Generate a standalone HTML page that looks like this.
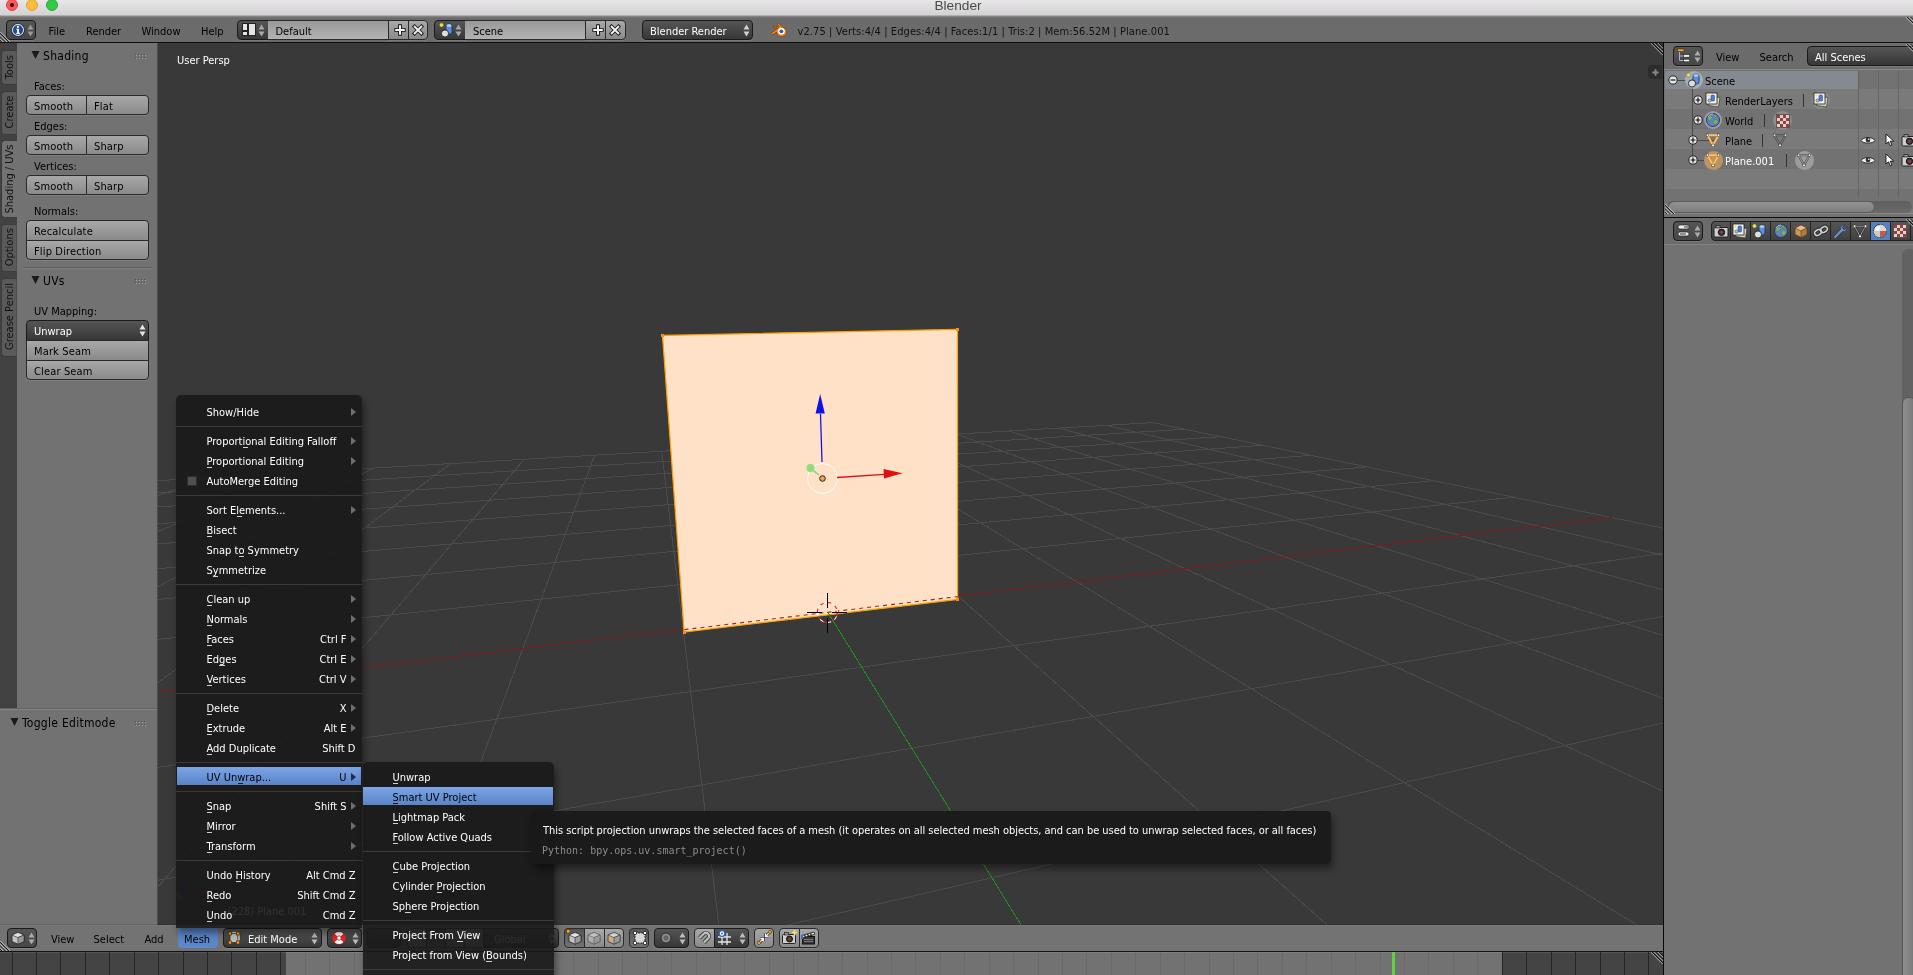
<!DOCTYPE html><html><head><meta charset="utf-8"><title>Blender</title><style>
*{box-sizing:border-box;margin:0;padding:0}
html,body{width:1913px;height:975px;overflow:hidden;background:#727272}
body{position:relative;font-family:"DejaVu Sans Condensed","DejaVu Sans","Liberation Sans",sans-serif;font-size:11px;color:#000;line-height:1;-webkit-font-smoothing:antialiased}
.a{position:absolute}
.t{position:absolute;white-space:nowrap;line-height:14px;height:14px;margin-top:1px}
.w{color:#fff}
/* mac title */
#title{left:0;top:0;width:1913px;height:16px;background:linear-gradient(#e8e6e8,#d3d2d3);border-bottom:1px solid #b0aeb0}
#title .tt{left:0;width:1913px;text-align:center;top:-3.5px;padding-left:3px;font-family:"Liberation Sans","DejaVu Sans",sans-serif;font-size:13.7px;color:#4a4a4a;line-height:16px;height:16px}
.tl{position:absolute;width:12px;height:12px;border-radius:50%;top:-1.5px}
/* headers */
.hdr{background:#727272}
.hdrd{background:#6b6b6b}
/* buttons */
.btn{position:absolute;box-shadow:0 1px 0 rgba(255,255,255,.1);border:1px solid #2a2a2a;border-radius:4px;background:linear-gradient(#a8a8a8,#8a8a8a);height:20px}
.btn .t{top:3px;letter-spacing:.15px}
.dd{position:absolute;box-shadow:0 1px 0 rgba(255,255,255,.1);border:1px solid #1a1a1a;border-radius:4px;background:linear-gradient(#555,#373737);height:20px;color:#fff}
.dd .t{top:3px}
.tf{position:absolute;border:1px solid #2a2a2a;background:linear-gradient(#999,#b2b2b2);height:20px}
.sel{background:linear-gradient(#555,#737373)}
.ud{position:absolute;width:7px;height:13px}
/* menu */
.menu{position:absolute;background:rgba(25,25,25,.9);box-shadow:2px 5px 7px 0 rgba(0,0,0,.42)}
.mi{position:absolute;left:0;right:0;height:20px;color:#fff}
.mi .t{top:3px}
.mi.hl{background:linear-gradient(#7ba5e7,#5a84c6);color:#000;height:18px;left:.5px;right:.5px}
.mi .sc{position:absolute;top:4px;line-height:14px;white-space:nowrap}
.msep{position:absolute;left:0;right:0;height:1px;background:#3a3a3a}
.arr{position:absolute;width:0;height:0;border-left:5px solid #6e6e6e;border-top:4px solid transparent;border-bottom:4px solid transparent}
u{text-decoration:underline;text-decoration-thickness:1px;text-underline-offset:2px;text-decoration-skip-ink:none;text-decoration-color:rgba(255,255,255,.78)}
.hl u{text-decoration-color:rgba(0,0,0,.8)}
.ul{position:absolute;top:15.8px;height:1.2px;width:5.4px;background:rgba(255,255,255,.8)}
.hl .ul{background:rgba(0,0,0,.8)}
</style></head><body><div id="root" style="position:absolute;left:0;top:0;width:1913px;height:975px;will-change:transform"><div class="a" id="vp" style="left:158px;top:43px;width:1505px;height:882px;background:#393939;overflow:hidden"><svg class="a" style="left:0;top:0" width="1505" height="882" viewBox="0 0 1505 882" shape-rendering="crispEdges"><path d="M-7745.4 2849.4L-41.7 440.1M11423.7 2609.6L10616.1 2370.3M-6526.8 2834.2L48.4 434.9M7558.3 2657.9L5122.6 1233.6M-5308.2 2818.9L133.9 429.9M3692.8 2706.3L3492.7 896.4M-4089.5 2803.7L215.2 425.1M-172.6 2754.7L2710.9 734.6M-2870.9 2788.4L292.6 420.6M-4038.0 2803.0L2251.9 639.6M-1652.2 2773.2L366.3 416.3M-7324.3 2717.7L1950.0 577.2M-433.6 2757.9L436.6 412.2M-2983.1 1360.0L1736.3 533.0M785.0 2742.7L503.7 408.3M-1743.3 972.3L1577.1 500.0M3222.3 2712.2L629.4 400.9M-813.7 681.6L1355.8 454.2M4440.9 2696.9L688.2 397.5M-589.3 611.4L1275.7 437.6M5659.6 2681.7L744.6 394.2M-430.9 561.9L1209.2 423.9M6878.2 2666.4L798.7 391.0M-313.1 525.0L1153.0 412.3M8096.9 2651.2L850.7 388.0M-222.1 496.6L1104.9 402.3M9315.5 2635.9L900.7 385.1M-149.7 473.9L1063.3 393.7M10534.1 2620.7L948.7 382.3M-90.7 455.5L1027.0 386.2M10616.1 2370.3L995.0 379.6M-41.7 440.1L995.0 379.6" stroke="#4b4b4b" stroke-width="1" fill="none"/>
<path d="M-1156.2 788.7L1453.9 474.5" stroke="#7a1c1c" stroke-width="1" fill="none"/>
<path d="M2003.7 2727.4L567.9 404.5" stroke="#1f7a1f" stroke-width="1" fill="none"/><polygon points="504.5,292.4 799.5,286.3 799.6,556.4 526.1,589.0" fill="#fee1c7" stroke="#ffa000" stroke-width="1.2" shape-rendering="auto"/><path d="M526.5 586.6L799.5 553.6" stroke="#a32a12" stroke-width="1.1" stroke-dasharray="4 4" fill="none" shape-rendering="auto"/><path d="M669.6 568.9L2003.7 2727.4" stroke="#1f8a1f" stroke-width="1" fill="none"/><rect x="503.0" y="290.9" width="3" height="3" fill="#ff8c1a"/><rect x="798.0" y="284.8" width="3" height="3" fill="#ff8c1a"/><rect x="798.1" y="554.9" width="3" height="3" fill="#ff8c1a"/><rect x="524.6" y="587.5" width="3" height="3" fill="#ff8c1a"/></svg><svg class="a" style="left:0;top:0" width="1505" height="882" viewBox="158 43 1505 882"><circle cx="822.5" cy="478.5" r="15" fill="none" stroke="#fff" stroke-width="1" opacity=".9"/><circle cx="822.5" cy="478.5" r="2.8" fill="#f5a64a" stroke="#222" stroke-width="1"/><path d="M822 462L820.5 414" stroke="#1414e0" stroke-width="1.3"/><path d="M820.2 394l4.6 19.5h-9.2z" fill="#1010e8"/><path d="M837 477.5L884 474.3" stroke="#e01010" stroke-width="1.3"/><path d="M902.5 473.2l-18.5 5.2l-.5-9.4z" fill="#e01010"/><path d="M819 475L812 469.5" stroke="#7fd26a" stroke-width="1.2"/><circle cx="810.5" cy="468" r="4" fill="#8fdc78"/><circle cx="827.3" cy="612.5" r="10" fill="none" stroke="#e02020" stroke-width="1.1" stroke-dasharray="3.9 3.95"/><circle cx="827.3" cy="612.5" r="10" fill="none" stroke="#fff" stroke-width="1.1" stroke-dasharray="3.9 3.95" stroke-dashoffset="3.9"/><path d="M827.5 593v15M827.5 618v15M807 612.5h15M832 612.5h15" stroke="#000" stroke-width="1" shape-rendering="crispEdges"/></svg><div class="t w" style="left:19px;top:10px">User Persp</div><div class="t w" style="left:69.5px;top:861px">(228) Plane.001</div><div class="a" style="left:1490px;top:22px;width:14px;height:14px;background:#2c2c2c;border-radius:4px 0 0 4px"></div><svg class="a" style="left:1492.5px;top:24.500px" width="9" height="9" viewBox="0 0 9 9"><path d="M4.500 1.300v6.400M1.300 4.500h6.400" stroke="#858585" stroke-width="2"/></svg><svg class="a" style="left:0;top:0" width="1505" height="882" viewBox="158 43 1505 882"><path d="M183 899.500L214.500 889.500" stroke="#c02020" stroke-width="1.200"/><path d="M183 899.500L176.500 894.500" stroke="#20c020" stroke-width="1.200"/><path d="M183 899.500L183 868" stroke="#2020d0" stroke-width="1.200"/></svg></div><div class="a" style="left:0;top:43px;width:17px;height:665px;background:#424242"></div><div class="a" style="left:1px;top:49.5px;width:16px;height:35.5px;background:#5a5a5a;border:1px solid #3c3c3c;border-right:1px solid #4d4d4d;border-radius:4px 0 0 4px"></div><div class="t" style="left:3px;top:83.5px;width:35.5px;text-align:center;transform-origin:0 0;transform:rotate(-90deg);color:#111">Tools</div><div class="a" style="left:1px;top:90.5px;width:16px;height:44px;background:#5a5a5a;border:1px solid #3c3c3c;border-right:1px solid #4d4d4d;border-radius:4px 0 0 4px"></div><div class="t" style="left:3px;top:133px;width:44px;text-align:center;transform-origin:0 0;transform:rotate(-90deg);color:#111">Create</div><div class="a" style="left:1px;top:140px;width:16px;height:78px;background:#727272;border:1px solid #3c3c3c;border-right:none;border-radius:4px 0 0 4px"></div><div class="t" style="left:3px;top:216.5px;width:78px;text-align:center;transform-origin:0 0;transform:rotate(-90deg);color:#111">Shading / UVs</div><div class="a" style="left:1px;top:224px;width:16px;height:47.5px;background:#5a5a5a;border:1px solid #3c3c3c;border-right:1px solid #4d4d4d;border-radius:4px 0 0 4px"></div><div class="t" style="left:3px;top:270px;width:47.5px;text-align:center;transform-origin:0 0;transform:rotate(-90deg);color:#111">Options</div><div class="a" style="left:1px;top:277.5px;width:16px;height:79px;background:#5a5a5a;border:1px solid #3c3c3c;border-right:1px solid #4d4d4d;border-radius:4px 0 0 4px"></div><div class="t" style="left:3px;top:355px;width:79px;text-align:center;transform-origin:0 0;transform:rotate(-90deg);color:#111">Grease Pencil</div><div class="a" style="left:17px;top:43px;width:140px;height:665px;background:#727272"></div><div class="a" style="left:157px;top:43px;width:1px;height:882px;background:#4d4d4d"></div><svg class="a" style="left:31px;top:50px" width="10" height="10" viewBox="0 0 10 10"><path d="M0.5 1h8L4.5 9z" fill="#1a1a1a"/></svg><div class="t" style="left:43px;top:48px;font-size:12px;letter-spacing:.28px">Shading</div><svg class="a" style="left:135px;top:54px" width="12" height="5" viewBox="0 0 12 5"><rect x="0" y="0" width="1" height="1" fill="#505050"/><rect x="1" y="1" width="1" height="1" fill="#a2a2a2"/><rect x="0" y="3" width="1" height="1" fill="#505050"/><rect x="1" y="4" width="1" height="1" fill="#a2a2a2"/><rect x="3" y="0" width="1" height="1" fill="#505050"/><rect x="4" y="1" width="1" height="1" fill="#a2a2a2"/><rect x="3" y="3" width="1" height="1" fill="#505050"/><rect x="4" y="4" width="1" height="1" fill="#a2a2a2"/><rect x="6" y="0" width="1" height="1" fill="#505050"/><rect x="7" y="1" width="1" height="1" fill="#a2a2a2"/><rect x="6" y="3" width="1" height="1" fill="#505050"/><rect x="7" y="4" width="1" height="1" fill="#a2a2a2"/><rect x="9" y="0" width="1" height="1" fill="#505050"/><rect x="10" y="1" width="1" height="1" fill="#a2a2a2"/><rect x="9" y="3" width="1" height="1" fill="#505050"/><rect x="10" y="4" width="1" height="1" fill="#a2a2a2"/></svg><div class="t" style="left:34px;top:79px">Faces:</div><div class="btn" style="left:26px;top:95px;width:61px;height:20px;border-radius:4px 0 0 4px;"><div class="t" style="left:7px">Smooth</div></div><div class="btn" style="left:86px;top:95px;width:63px;height:20px;border-radius:0 4px 4px 0;"><div class="t" style="left:7px">Flat</div></div><div class="t" style="left:34px;top:119px">Edges:</div><div class="btn" style="left:26px;top:135px;width:61px;height:20px;border-radius:4px 0 0 4px;"><div class="t" style="left:7px">Smooth</div></div><div class="btn" style="left:86px;top:135px;width:63px;height:20px;border-radius:0 4px 4px 0;"><div class="t" style="left:7px">Sharp</div></div><div class="t" style="left:34px;top:159px">Vertices:</div><div class="btn" style="left:26px;top:175px;width:61px;height:20px;border-radius:4px 0 0 4px;"><div class="t" style="left:7px">Smooth</div></div><div class="btn" style="left:86px;top:175px;width:63px;height:20px;border-radius:0 4px 4px 0;"><div class="t" style="left:7px">Sharp</div></div><div class="t" style="left:34px;top:204px">Normals:</div><div class="btn" style="left:26px;top:220px;width:123px;height:21px;border-radius:4px 4px 0 0;"><div class="t" style="left:7px">Recalculate</div></div><div class="btn" style="left:26px;top:240px;width:123px;height:20px;border-radius:0 0 4px 4px;"><div class="t" style="left:7px">Flip Direction</div></div><div class="a" style="left:23px;top:267px;width:129px;height:1px;background:#5e5e5e"></div><div class="a" style="left:23px;top:268px;width:129px;height:1px;background:#808080"></div><svg class="a" style="left:31px;top:275px" width="10" height="10" viewBox="0 0 10 10"><path d="M0.5 1h8L4.5 9z" fill="#1a1a1a"/></svg><div class="t" style="left:43px;top:273px;font-size:12px;letter-spacing:.28px">UVs</div><svg class="a" style="left:135px;top:279px" width="12" height="5" viewBox="0 0 12 5"><rect x="0" y="0" width="1" height="1" fill="#505050"/><rect x="1" y="1" width="1" height="1" fill="#a2a2a2"/><rect x="0" y="3" width="1" height="1" fill="#505050"/><rect x="1" y="4" width="1" height="1" fill="#a2a2a2"/><rect x="3" y="0" width="1" height="1" fill="#505050"/><rect x="4" y="1" width="1" height="1" fill="#a2a2a2"/><rect x="3" y="3" width="1" height="1" fill="#505050"/><rect x="4" y="4" width="1" height="1" fill="#a2a2a2"/><rect x="6" y="0" width="1" height="1" fill="#505050"/><rect x="7" y="1" width="1" height="1" fill="#a2a2a2"/><rect x="6" y="3" width="1" height="1" fill="#505050"/><rect x="7" y="4" width="1" height="1" fill="#a2a2a2"/><rect x="9" y="0" width="1" height="1" fill="#505050"/><rect x="10" y="1" width="1" height="1" fill="#a2a2a2"/><rect x="9" y="3" width="1" height="1" fill="#505050"/><rect x="10" y="4" width="1" height="1" fill="#a2a2a2"/></svg><div class="t" style="left:34px;top:304px">UV Mapping:</div><div class="dd" style="left:26px;top:320px;width:123px;height:21px;border-radius:4px 4px 0 0"><div class="t" style="left:7px">Unwrap</div></div><svg class="a" style="left:139px;top:324px" width="7" height="13" viewBox="0 0 7 13"><path d="M3.5 0.5L6.5 5.5H.5zM3.5 12.5L6.5 7.5H.5z" fill="#e6e6e6"/></svg><div class="btn" style="left:26px;top:340px;width:123px;height:21px;border-radius:0;"><div class="t" style="left:7px">Mark Seam</div></div><div class="btn" style="left:26px;top:360px;width:123px;height:20px;border-radius:0 0 4px 4px;"><div class="t" style="left:7px">Clear Seam</div></div><div class="a" style="left:0;top:708px;width:157px;height:1px;background:#626262"></div><div class="a" style="left:0;top:709px;width:157px;height:1px;background:#868686;z-index:1"></div><div class="a" style="left:0;top:709px;width:157px;height:216px;background:#727272"></div><svg class="a" style="left:10px;top:717px" width="10" height="10" viewBox="0 0 10 10"><path d="M0.5 1h8L4.5 9z" fill="#1a1a1a"/></svg><div class="t" style="left:22px;top:715px;font-size:12px;letter-spacing:.28px">Toggle Editmode</div><svg class="a" style="left:135px;top:721px" width="12" height="5" viewBox="0 0 12 5"><rect x="0" y="0" width="1" height="1" fill="#505050"/><rect x="1" y="1" width="1" height="1" fill="#a2a2a2"/><rect x="0" y="3" width="1" height="1" fill="#505050"/><rect x="1" y="4" width="1" height="1" fill="#a2a2a2"/><rect x="3" y="0" width="1" height="1" fill="#505050"/><rect x="4" y="1" width="1" height="1" fill="#a2a2a2"/><rect x="3" y="3" width="1" height="1" fill="#505050"/><rect x="4" y="4" width="1" height="1" fill="#a2a2a2"/><rect x="6" y="0" width="1" height="1" fill="#505050"/><rect x="7" y="1" width="1" height="1" fill="#a2a2a2"/><rect x="6" y="3" width="1" height="1" fill="#505050"/><rect x="7" y="4" width="1" height="1" fill="#a2a2a2"/><rect x="9" y="0" width="1" height="1" fill="#505050"/><rect x="10" y="1" width="1" height="1" fill="#a2a2a2"/><rect x="9" y="3" width="1" height="1" fill="#505050"/><rect x="10" y="4" width="1" height="1" fill="#a2a2a2"/></svg><div class="a" style="left:1663px;top:43px;width:1px;height:932px;background:#080808"></div><div class="a" style="left:1664px;top:43px;width:249px;height:26px;background:#6b6b6b"></div><div class="a" style="left:1664px;top:69px;width:249px;height:1px;background:#888"></div><div class="a" style="left:1664px;top:70px;width:249px;height:143px;background:#727272;overflow:hidden"><div class="a" style="left:.5px;top:0;width:0;height:0"><div class="a" style="left:0;top:19px;width:248px;height:20px;background:#7a7a7a"></div><div class="a" style="left:0;top:59px;width:248px;height:20px;background:#7a7a7a"></div><div class="a" style="left:0;top:99px;width:248px;height:20px;background:#7a7a7a"></div><div class="a" style="left:0;top:139px;width:248px;height:20px;background:#7a7a7a"></div><div class="a" style="left:0;top:1px;width:193px;height:18px;background:#848a8f"></div><div class="a" style="left:193px;top:0;width:1px;height:128px;background:#666"></div><div class="a" style="left:213px;top:0;width:1px;height:128px;background:#666"></div><div class="a" style="left:233px;top:0;width:1px;height:128px;background:#666"></div></div></div><svg class="a" style="left:1665px;top:70px" width="100" height="110" viewBox="0 0 100 110"><path d="M12 10.500h18M27.500 18v73M27.500 70.500h22M27.500 90.500h22" stroke="#4a4a4a" stroke-width="1" fill="none"/></svg><svg class="a" style="left:1667.5px;top:74.5px" width="10" height="10" viewBox="0 0 10 10"><circle cx="5" cy="5" r="4.100" fill="#e6e6e6" stroke="#1a1a1a" stroke-width=".9"/><path d="M2.600 5h4.800" stroke="#111" stroke-width="1.200"/></svg><div class="a" style="left:1685px;top:71px;width:18px;height:18px;border-radius:50%;background:#a6adb3"></div><svg class="a" style="left:1685px;top:71px" width="18" height="18" viewBox="0 0 18 18"><rect x="8" y="3" width="6" height="10" rx="2.500" fill="#5c8fe0" stroke="#16305e" stroke-width=".8"/><ellipse cx="11" cy="4.500" rx="2.600" ry="1.300" fill="#b8d0f5"/><circle cx="7" cy="12.500" r="3.600" fill="#ddd" stroke="#222" stroke-width=".9"/><circle cx="3.500" cy="4" r="1.900" fill="#f2e85a" stroke="#8a8420" stroke-width=".6"/></svg><div class="t" style="left:1705px;top:74px">Scene</div><svg class="a" style="left:1692.5px;top:94.5px" width="10" height="10" viewBox="0 0 10 10"><circle cx="5" cy="5" r="4.100" fill="#e6e6e6" stroke="#1a1a1a" stroke-width=".9"/><path d="M2.600 5h4.800M5 2.600v4.800" stroke="#111" stroke-width="1.200"/></svg><svg class="a" style="left:1705px;top:92px" width="17" height="16" viewBox="0 0 17 16"><path d="M5 4l10 1.500-1.500 9.500L3.500 13.500z" fill="#d9d2b0" stroke="#333" stroke-width=".7"/><rect x="1" y="1" width="11" height="11" fill="#f0f0f0" stroke="#222" stroke-width=".8"/><rect x="6" y="3" width="3.500" height="6" rx="1" fill="#4d7fd6" stroke="#1c3a78" stroke-width=".5"/><circle cx="4.500" cy="8.500" r="1.600" fill="#bbb" stroke="#333" stroke-width=".5"/><circle cx="3.500" cy="3.500" r="1.100" fill="#f0e040"/></svg><div class="t" style="left:1725px;top:94px">RenderLayers</div><div class="a" style="left:1803px;top:94px;width:1px;height:13px;background:#333"></div><div class="a" style="left:1812px;top:91px;width:18px;height:18px;border-radius:50%;background:#8c8c8c"></div><svg class="a" style="left:1813px;top:92px" width="17" height="16" viewBox="0 0 17 16"><path d="M5 4l10 1.500-1.500 9.500L3.500 13.500z" fill="#d9d2b0" stroke="#333" stroke-width=".7"/><rect x="1" y="1" width="11" height="11" fill="#f0f0f0" stroke="#222" stroke-width=".8"/><rect x="6" y="3" width="3.500" height="6" rx="1" fill="#4d7fd6" stroke="#1c3a78" stroke-width=".5"/><circle cx="4.500" cy="8.500" r="1.600" fill="#bbb" stroke="#333" stroke-width=".5"/><circle cx="3.500" cy="3.500" r="1.100" fill="#f0e040"/></svg><svg class="a" style="left:1692.5px;top:114.5px" width="10" height="10" viewBox="0 0 10 10"><circle cx="5" cy="5" r="4.100" fill="#e6e6e6" stroke="#1a1a1a" stroke-width=".9"/><path d="M2.600 5h4.800M5 2.600v4.800" stroke="#111" stroke-width="1.200"/></svg><div class="a" style="left:1704px;top:111px;width:18px;height:18px;border-radius:50%;background:#9a9ab0"></div><svg class="a" style="left:1705px;top:112px" width="16" height="16" viewBox="0 0 16 16"><circle cx="8" cy="8" r="6.500" fill="#5d86c0" stroke="#27324a" stroke-width=".9"/><path d="M4 4.500c1.500-1 3-.5 3.500.5s-.5 2-1.500 2.500S4.500 9.500 3.500 8.500 3 5.500 4 4.500zM9 8c1-1 3.500-.5 4 1s-1.500 3.500-3 3.500S8 9 9 8zM9.500 2.500c1 0 2.500 1 2.500 2s-1.500.5-2.500 0-.5-2 0-2z" fill="#7fae6a" stroke="#3f6a3a" stroke-width=".4"/><path d="M3 5a6 6 0 0 1 5-3.200" stroke="#cfe2ff" stroke-width="1" fill="none" opacity=".7"/></svg><div class="t" style="left:1725px;top:114px">World</div><div class="a" style="left:1764px;top:114px;width:1px;height:13px;background:#333"></div><div class="a" style="left:1773px;top:111px;width:19px;height:19px;border-radius:50%;background:#8c8c8c"></div><svg class="a" style="left:1775.5px;top:113.5px" width="14" height="14" viewBox="0 0 14 14"><rect x=".5" y=".5" width="13" height="13" fill="#ddd2d2" stroke="#5a3a3a" stroke-width=".8"/><rect x="1" y="1" width="3" height="3" fill="#93423a"/><rect x="1" y="7" width="3" height="3" fill="#93423a"/><rect x="4" y="4" width="3" height="3" fill="#93423a"/><rect x="4" y="10" width="3" height="3" fill="#93423a"/><rect x="7" y="1" width="3" height="3" fill="#93423a"/><rect x="7" y="7" width="3" height="3" fill="#93423a"/><rect x="10" y="4" width="3" height="3" fill="#93423a"/><rect x="10" y="10" width="3" height="3" fill="#93423a"/></svg><svg class="a" style="left:1687.5px;top:134.5px" width="10" height="10" viewBox="0 0 10 10"><circle cx="5" cy="5" r="4.100" fill="#e6e6e6" stroke="#1a1a1a" stroke-width=".9"/><path d="M2.600 5h4.800M5 2.600v4.800" stroke="#111" stroke-width="1.200"/></svg><svg class="a" style="left:1705px;top:132px" width="16" height="16" viewBox="0 0 16 16"><path d="M2.500 3.200h11L8 13.300z" fill="none" stroke="#f29b30" stroke-width="2.300" stroke-linejoin="round"/><path d="M2.500 3.200h11L8 13.300z" fill="none" stroke="#ffe9cc" stroke-width=".7" stroke-linejoin="round"/><g fill="#fff" stroke="#3a2a10" stroke-width=".5"><rect x="1.300" y="2" width="2.400" height="2.400"/><rect x="12.300" y="2" width="2.400" height="2.400"/><rect x="6.800" y="12.100" width="2.400" height="2.400"/></g></svg><div class="t" style="left:1725px;top:134px">Plane</div><div class="a" style="left:1762px;top:134px;width:1px;height:13px;background:#333"></div><svg class="a" style="left:1772px;top:132px" width="16" height="16" viewBox="0 0 16 16"><path d="M2.500 3.200h11L8 13.300z" fill="none" stroke="#4a4a4a" stroke-width="2.300" stroke-linejoin="round"/><path d="M2.500 3.200h11L8 13.300z" fill="none" stroke="#9a9a9a" stroke-width=".7" stroke-linejoin="round"/><g fill="#e8e8e8" stroke="#3a2a10" stroke-width=".5"><rect x="1.300" y="2" width="2.400" height="2.400"/><rect x="12.300" y="2" width="2.400" height="2.400"/><rect x="6.800" y="12.100" width="2.400" height="2.400"/></g></svg><svg class="a" style="left:1687.5px;top:154.5px" width="10" height="10" viewBox="0 0 10 10"><circle cx="5" cy="5" r="4.100" fill="#e6e6e6" stroke="#1a1a1a" stroke-width=".9"/><path d="M2.600 5h4.800M5 2.600v4.800" stroke="#111" stroke-width="1.200"/></svg><div class="a" style="left:1703.5px;top:150.5px;width:19px;height:19px;border-radius:50%;background:#ba9462"></div><svg class="a" style="left:1705px;top:152px" width="16" height="16" viewBox="0 0 16 16"><path d="M2.500 3.200h11L8 13.300z" fill="none" stroke="#f29b30" stroke-width="2.300" stroke-linejoin="round"/><path d="M2.500 3.200h11L8 13.300z" fill="none" stroke="#ffe9cc" stroke-width=".7" stroke-linejoin="round"/><g fill="#fff" stroke="#3a2a10" stroke-width=".5"><rect x="1.300" y="2" width="2.400" height="2.400"/><rect x="12.300" y="2" width="2.400" height="2.400"/><rect x="6.800" y="12.100" width="2.400" height="2.400"/></g></svg><div class="t w" style="left:1725px;top:154px">Plane.001</div><div class="a" style="left:1786px;top:154px;width:1px;height:13px;background:#333"></div><div class="a" style="left:1794.5px;top:150.5px;width:19px;height:19px;border-radius:50%;background:#9c9c9c"></div><svg class="a" style="left:1796px;top:152px" width="16" height="16" viewBox="0 0 16 16"><path d="M2.500 3.200h11L8 13.300z" fill="none" stroke="#5a5a5a" stroke-width="2.300" stroke-linejoin="round"/><path d="M2.500 3.200h11L8 13.300z" fill="none" stroke="#b4b4b4" stroke-width=".7" stroke-linejoin="round"/><g fill="#eee" stroke="#3a2a10" stroke-width=".5"><rect x="1.300" y="2" width="2.400" height="2.400"/><rect x="12.300" y="2" width="2.400" height="2.400"/><rect x="6.800" y="12.100" width="2.400" height="2.400"/></g></svg><svg class="a" style="left:1860px;top:135px" width="16" height="10" viewBox="0 0 16 10"><path d="M1 5.500C3.500 1.500 12.500 1.500 15 5.500 12.500 9 3.500 9 1 5.500z" fill="#f2f2f2" stroke="#222" stroke-width=".9"/><circle cx="8" cy="5" r="2.400" fill="#333"/><circle cx="8.800" cy="4.200" r=".8" fill="#fff"/></svg><svg class="a" style="left:1885px;top:133px" width="10" height="14" viewBox="0 0 10 14"><path d="M1 1v10l2.500-2.200 1.800 4 1.700-.8-1.800-3.800H8.800z" fill="#fff" stroke="#111" stroke-width=".9" stroke-linejoin="round"/></svg><svg class="a" style="left:1901px;top:133px" width="16" height="14" viewBox="0 0 16 14"><rect x="1" y="3.500" width="14" height="9.500" rx="1" fill="#cfcfcf" stroke="#222"/><rect x="3" y="1.500" width="4" height="2.500" fill="#999" stroke="#222" stroke-width=".7"/><circle cx="8.500" cy="8.300" r="3.200" fill="#3a3a3a" stroke="#111"/><circle cx="8.500" cy="8.300" r="1.300" fill="#b03030"/></svg><svg class="a" style="left:1860px;top:155px" width="16" height="10" viewBox="0 0 16 10"><path d="M1 5.500C3.500 1.500 12.500 1.500 15 5.500 12.500 9 3.500 9 1 5.500z" fill="#f2f2f2" stroke="#222" stroke-width=".9"/><circle cx="8" cy="5" r="2.400" fill="#333"/><circle cx="8.800" cy="4.200" r=".8" fill="#fff"/></svg><svg class="a" style="left:1885px;top:153px" width="10" height="14" viewBox="0 0 10 14"><path d="M1 1v10l2.500-2.200 1.800 4 1.700-.8-1.800-3.800H8.800z" fill="#fff" stroke="#111" stroke-width=".9" stroke-linejoin="round"/></svg><svg class="a" style="left:1901px;top:153px" width="16" height="14" viewBox="0 0 16 14"><rect x="1" y="3.500" width="14" height="9.500" rx="1" fill="#cfcfcf" stroke="#222"/><rect x="3" y="1.500" width="4" height="2.500" fill="#999" stroke="#222" stroke-width=".7"/><circle cx="8.500" cy="8.300" r="3.200" fill="#3a3a3a" stroke="#111"/><circle cx="8.500" cy="8.300" r="1.300" fill="#b03030"/></svg><div class="dd" style="left:1673px;top:46px;width:30px;background:linear-gradient(#555,#474747)"></div><svg class="a" style="left:1693.5px;top:50px" width="7" height="13" viewBox="0 0 7 13"><path d="M3.5 0.5L6.5 5.5H.5zM3.5 12.5L6.5 7.5H.5z" fill="#aaa"/></svg><svg class="a" style="left:1676px;top:48px" width="16" height="16" viewBox="0 0 16 16"><path d="M3.500 3.500v9h4M3.500 8h4" stroke="#9ab4d8" stroke-width="1" fill="none"/><rect x="1.500" y="1" width="6.500" height="2.600" fill="#f5a63c" stroke="#4a2a00" stroke-width=".6"/><rect x="7.500" y="6.600" width="6" height="2.600" fill="#f0f0f0" stroke="#222" stroke-width=".6"/><rect x="7.500" y="11.200" width="6" height="2.600" fill="#f0f0f0" stroke="#222" stroke-width=".6"/></svg><div class="t" style="left:1716px;top:50px">View</div><div class="t" style="left:1759.500px;top:50px">Search</div><div class="dd" style="left:1807px;top:46px;width:120px"><div class="t" style="left:7px">All Scenes</div></div><div class="a" style="left:1667px;top:200.5px;width:245px;height:12px;border-radius:6px;background:linear-gradient(#5e5e5e,#6a6a6a)"></div><div class="a" style="left:1667.5px;top:200.5px;width:207px;height:12px;border-radius:6px;background:linear-gradient(#929292,#7e7e7e);border:1px solid #5a5a5a"></div><div class="a" style="left:1664px;top:213px;width:249px;height:1px;background:#8a8a8a"></div><div class="a" style="left:1664px;top:214px;width:249px;height:3px;background:#727272"></div><div class="a" style="left:1664px;top:217px;width:249px;height:1px;background:#0c0c0c"></div><div class="a" style="left:1664px;top:218px;width:249px;height:26px;background:#6b6b6b"></div><div class="a" style="left:1664px;top:243.5px;width:249px;height:1px;background:#838383"></div><div class="a" style="left:1664px;top:244.5px;width:249px;height:731px;background:#727272"></div><div class="dd" style="left:1673px;top:221px;width:30px;background:linear-gradient(#555,#474747)"></div><svg class="a" style="left:1693.5px;top:225px" width="7" height="13" viewBox="0 0 7 13"><path d="M3.5 0.5L6.5 5.5H.5zM3.5 12.5L6.5 7.5H.5z" fill="#aaa"/></svg><svg class="a" style="left:1677px;top:223px" width="15" height="15" viewBox="0 0 15 15"><rect x="1" y="2" width="11" height="4" rx="2" fill="#eee" stroke="#222" stroke-width=".7"/><rect x="1" y="9" width="11" height="4" rx="2" fill="#eee" stroke="#222" stroke-width=".7"/><path d="M7 4h4M3 11h6" stroke="#333" stroke-width="1.200"/></svg><div class="a" style="left:1710.5px;top:221px;width:21px;height:20px;border:1px solid #222;border-radius:4px 0 0 4px;background:linear-gradient(#565656,#404040);"></div><div class="a" style="left:1730.4px;top:221px;width:21px;height:20px;border:1px solid #222;border-radius:0;background:linear-gradient(#565656,#404040);"></div><div class="a" style="left:1750.3px;top:221px;width:21px;height:20px;border:1px solid #222;border-radius:0;background:linear-gradient(#565656,#404040);"></div><div class="a" style="left:1770.2px;top:221px;width:21px;height:20px;border:1px solid #222;border-radius:0;background:linear-gradient(#565656,#404040);"></div><div class="a" style="left:1790.1px;top:221px;width:21px;height:20px;border:1px solid #222;border-radius:0;background:linear-gradient(#565656,#404040);"></div><div class="a" style="left:1810.0px;top:221px;width:21px;height:20px;border:1px solid #222;border-radius:0;background:linear-gradient(#565656,#404040);"></div><div class="a" style="left:1829.9px;top:221px;width:21px;height:20px;border:1px solid #222;border-radius:0;background:linear-gradient(#565656,#404040);"></div><div class="a" style="left:1849.8px;top:221px;width:21px;height:20px;border:1px solid #222;border-radius:0;background:linear-gradient(#565656,#404040);"></div><div class="a" style="left:1869.7px;top:221px;width:21px;height:20px;border:1px solid #222;border-radius:0;background:#5680c2;"></div><div class="a" style="left:1889.6px;top:221px;width:21px;height:20px;border:1px solid #222;border-radius:0;background:linear-gradient(#565656,#404040);"></div><div class="a" style="left:1909.5px;top:221px;width:21px;height:20px;border:1px solid #222;border-radius:0;background:linear-gradient(#565656,#404040);"></div><svg class="a" style="left:1713px;top:224px" width="16" height="14" viewBox="0 0 16 14"><rect x="1" y="3.500" width="14" height="9.500" rx="1" fill="#cfcfcf" stroke="#222"/><rect x="3" y="1.500" width="4" height="2.500" fill="#999" stroke="#222" stroke-width=".7"/><circle cx="8.500" cy="8.300" r="3.200" fill="#3a3a3a" stroke="#111"/><circle cx="8.500" cy="8.300" r="1.300" fill="#b03030"/></svg><svg class="a" style="left:1732.4px;top:223px" width="17" height="16" viewBox="0 0 17 16"><path d="M5 4l10 1.500-1.500 9.500L3.500 13.500z" fill="#d9d2b0" stroke="#333" stroke-width=".7"/><rect x="1" y="1" width="11" height="11" fill="#f0f0f0" stroke="#222" stroke-width=".8"/><rect x="6" y="3" width="3.500" height="6" rx="1" fill="#4d7fd6" stroke="#1c3a78" stroke-width=".5"/><circle cx="4.500" cy="8.500" r="1.600" fill="#bbb" stroke="#333" stroke-width=".5"/><circle cx="3.500" cy="3.500" r="1.100" fill="#f0e040"/></svg><svg class="a" style="left:1751.3px;top:222px" width="18" height="18" viewBox="0 0 18 18"><rect x="8" y="3" width="6" height="10" rx="2.500" fill="#5c8fe0" stroke="#16305e" stroke-width=".8"/><ellipse cx="11" cy="4.500" rx="2.600" ry="1.300" fill="#b8d0f5"/><circle cx="7" cy="12.500" r="3.600" fill="#ddd" stroke="#222" stroke-width=".9"/><circle cx="3.500" cy="4" r="1.900" fill="#f2e85a" stroke="#8a8420" stroke-width=".6"/></svg><svg class="a" style="left:1772.7px;top:223px" width="16" height="16" viewBox="0 0 16 16"><circle cx="8" cy="8" r="6.500" fill="#5d86c0" stroke="#27324a" stroke-width=".9"/><path d="M4 4.500c1.500-1 3-.5 3.500.5s-.5 2-1.500 2.500S4.500 9.500 3.500 8.500 3 5.500 4 4.500zM9 8c1-1 3.500-.5 4 1s-1.500 3.500-3 3.500S8 9 9 8zM9.500 2.500c1 0 2.500 1 2.500 2s-1.500.5-2.500 0-.5-2 0-2z" fill="#7fae6a" stroke="#3f6a3a" stroke-width=".4"/><path d="M3 5a6 6 0 0 1 5-3.200" stroke="#cfe2ff" stroke-width="1" fill="none" opacity=".7"/></svg><svg class="a" style="left:1792.6px;top:223px" width="16" height="16" viewBox="0 0 16 16"><path d="M2 5l6-3 6 3v6.500l-6 3-6-3z" fill="#cb975f" stroke="#5a3a10" stroke-width=".8"/><path d="M2 5l6 3 6-3-6-3z" fill="#e3bd8c" stroke="#5a3a10" stroke-width=".6"/><path d="M8 8v6.500l6-3V5z" fill="#b07c45" stroke="#5a3a10" stroke-width=".6"/></svg><svg class="a" style="left:1812.5px;top:223px" width="16" height="16" viewBox="0 0 16 16"><g fill="none" stroke="#222" stroke-width="3.200"><rect x="1.500" y="7" width="7" height="5" rx="2.500" transform="rotate(-35 5 9.500)"/><rect x="7.500" y="4" width="7" height="5" rx="2.500" transform="rotate(-35 11 6.500)"/></g><g fill="none" stroke="#d0d0d0" stroke-width="1.600"><rect x="1.500" y="7" width="7" height="5" rx="2.500" transform="rotate(-35 5 9.500)"/><rect x="7.500" y="4" width="7" height="5" rx="2.500" transform="rotate(-35 11 6.500)"/></g></svg><svg class="a" style="left:1832.4px;top:223px" width="16" height="16" viewBox="0 0 16 16"><path d="M2.500 14.500l7-7.500a3.500 3.500 0 0 1 4-4.500l-2 2.200.5 1.800 1.800.5 2-2.200a3.500 3.500 0 0 1-4.500 4.200l-7 7.300z" transform="translate(-1,-.5)" fill="#7595c4" stroke="#2a3a55" stroke-width=".8"/></svg><svg class="a" style="left:1852.3px;top:223px" width="16" height="16" viewBox="0 0 16 16"><path d="M2.500 3.200h11L8 13.300z" fill="none" stroke="#2a2a2a" stroke-width="2.300" stroke-linejoin="round"/><path d="M2.500 3.200h11L8 13.300z" fill="none" stroke="#d0d0d0" stroke-width=".7" stroke-linejoin="round"/><g fill="#fff" stroke="#3a2a10" stroke-width=".5"><rect x="1.300" y="2" width="2.400" height="2.400"/><rect x="12.300" y="2" width="2.400" height="2.400"/><rect x="6.800" y="12.100" width="2.400" height="2.400"/></g></svg><svg class="a" style="left:1872.2px;top:223px" width="16" height="16" viewBox="0 0 16 16"><circle cx="8" cy="8" r="6.500" fill="#e8e8e8" stroke="#222" stroke-width=".8"/><path d="M8 8V1.500A6.500 6.500 0 0 1 14.500 8z" fill="#d9d9d9"/><path d="M8 8h6.500A6.500 6.500 0 0 1 8 14.500z" fill="#b8604a"/><path d="M8 8v6.500A6.500 6.500 0 0 1 1.500 8z" fill="#c9c9c9"/><circle cx="5.500" cy="5.500" r="2" fill="#fff" opacity=".8"/></svg><svg class="a" style="left:1893.1px;top:224px" width="14" height="14" viewBox="0 0 14 14"><rect x=".5" y=".5" width="13" height="13" fill="#ddd2d2" stroke="#5a3a3a" stroke-width=".8"/><rect x="1" y="1" width="3" height="3" fill="#93423a"/><rect x="1" y="7" width="3" height="3" fill="#93423a"/><rect x="4" y="4" width="3" height="3" fill="#93423a"/><rect x="4" y="10" width="3" height="3" fill="#93423a"/><rect x="7" y="1" width="3" height="3" fill="#93423a"/><rect x="7" y="7" width="3" height="3" fill="#93423a"/><rect x="10" y="4" width="3" height="3" fill="#93423a"/><rect x="10" y="10" width="3" height="3" fill="#93423a"/></svg><div class="a" style="left:1902px;top:249px;width:14px;height:740px;border-radius:6px;background:#626262"></div><div class="a" style="left:1902px;top:397px;width:14px;height:600px;border-radius:6px;background:linear-gradient(90deg,#8f8f8f,#767676);border:1px solid #555"></div><svg class="a" style="left:1665px;top:204px" width="10" height="10" viewBox="0 0 10 10"><path d="M0 1.0L9.0 10M0 4.5L5.5 10M0 8.0L2.0 10" stroke="rgba(0,0,0,.75)" stroke-width="1"/><path d="M0 -0.3L10.3 10M0 3.2L6.8 10M0 6.7L3.3 10" stroke="rgba(255,255,255,.62)" stroke-width="1"/></svg><svg class="a" style="left:1906px;top:44px" width="12" height="12" viewBox="0 0 12 12"><path d="M1.0 0L12 11.0M4.5 0L12 7.5M8.0 0L12 4.0" stroke="rgba(0,0,0,.75)" stroke-width="1"/><path d="M-0.3 0L12 12.3M3.2 0L12 8.8M6.7 0L12 5.3" stroke="rgba(255,255,255,.62)" stroke-width="1"/></svg><svg class="a" style="left:1651px;top:43px" width="12" height="12" viewBox="0 0 12 12"><path d="M1.0 0L12 11.0M4.5 0L12 7.5M8.0 0L12 4.0" stroke="rgba(0,0,0,.75)" stroke-width="1"/><path d="M-0.3 0L12 12.3M3.2 0L12 8.8M6.7 0L12 5.3" stroke="rgba(255,255,255,.62)" stroke-width="1"/></svg><svg class="a" style="left:1906px;top:219px" width="12" height="12" viewBox="0 0 12 12"><path d="M1.0 0L12 11.0M4.5 0L12 7.5M8.0 0L12 4.0" stroke="rgba(0,0,0,.75)" stroke-width="1"/><path d="M-0.3 0L12 12.3M3.2 0L12 8.8M6.7 0L12 5.3" stroke="rgba(255,255,255,.62)" stroke-width="1"/></svg><div class="a" style="left:0;top:924px;width:1663px;height:1px;background:rgba(0,0,0,.12)"></div><div class="a" style="left:0;top:925px;width:1663px;height:26px;background:linear-gradient(#7e7e7e 0,#737373 1px,#737373 100%)"></div><div class="a" style="left:0;top:951px;width:1663px;height:1px;background:#111"></div><div class="dd" style="left:7px;top:928px;width:30px;background:linear-gradient(#555,#474747)"></div><svg class="a" style="left:11px;top:931px;opacity:1" width="14" height="14" viewBox="0 0 14 14"><path d="M1 4l6-2.5L13 4v6.5L7 13.2 1 10.5z" fill="#c2c2c2" stroke="#222" stroke-width=".8"/><path d="M1 4l6 2.6L13 4 7 1.5z" fill="#e2e2e2" stroke="#222" stroke-width=".6"/><path d="M7 6.6v6.6L13 10.5V4z" fill="#9a9a9a" stroke="#222" stroke-width=".6"/></svg><svg class="a" style="left:28px;top:932px" width="7" height="13" viewBox="0 0 7 13"><path d="M3.5 0.5L6.5 5.5H.5zM3.5 12.5L6.5 7.5H.5z" fill="#aaa"/></svg><div class="t" style="left:51px;top:932px">View</div><div class="t" style="left:93.5px;top:932px">Select</div><div class="t" style="left:144.5px;top:932px">Add</div><div class="a" style="left:177.5px;top:927px;width:40px;height:21px;background:linear-gradient(#5680c2,#5d88cc);border-radius:0 0 4px 4px"></div><div class="t" style="left:184px;top:932px">Mesh</div><div class="dd" style="left:223px;top:928px;width:98.5px"><div class="t" style="left:24px">Edit Mode</div></div><svg class="a" style="left:311px;top:932px" width="7" height="13" viewBox="0 0 7 13"><path d="M3.5 0.5L6.5 5.5H.5zM3.5 12.5L6.5 7.5H.5z" fill="#bbb"/></svg><svg class="a" style="left:227px;top:930px" width="16" height="16" viewBox="0 0 16 16"><path d="M3 3.5h8v9H3z" fill="#bdbdbd" stroke="#333" stroke-width=".8"/><path d="M3 3.5l3-2h7l-2 2zM11 3.5l2-2v8.5l-2 2.5z" fill="#d9d9d9" stroke="#333" stroke-width=".6"/><g fill="#ffa31a" stroke="#5a3200" stroke-width=".7"><rect x="1.5" y="2" width="3" height="3"/><rect x="9.5" y="2" width="3" height="3"/><rect x="1.5" y="11" width="3" height="3"/><rect x="9.5" y="11" width="3" height="3"/></g></svg><div class="dd" style="left:327px;top:928px;width:34.5px"></div><svg class="a" style="left:351.5px;top:932px" width="7" height="13" viewBox="0 0 7 13"><path d="M3.5 0.5L6.5 5.5H.5zM3.5 12.5L6.5 7.5H.5z" fill="#bbb"/></svg><svg class="a" style="left:331px;top:930px" width="16" height="16" viewBox="0 0 16 16"><circle cx="8" cy="8" r="6.5" fill="#fff" stroke="#7a1010" stroke-width=".8"/><path d="M8 1.5A6.5 6.5 0 0 1 14.5 8H8zM8 14.5A6.5 6.5 0 0 1 1.500 8H8z" fill="#e02424" transform="rotate(45 8 8)"/><circle cx="8" cy="8" r="2.2" fill="#fff" stroke="#c02020" stroke-width=".8"/></svg><div class="dd" style="left:367px;top:928px;width:34px"></div><div class="btn" style="left:407px;top:928px;width:20px;border-radius:4px 0 0 4px"></div><div class="btn sel" style="left:426px;top:928px;width:20px;border-radius:0"></div><div class="btn" style="left:445px;top:928px;width:20px;border-radius:0"></div><div class="btn" style="left:464px;top:928px;width:20px;border-radius:0"></div><div class="dd" style="left:483px;top:928px;width:75.5px;border-radius:0 4px 4px 0"><div class="t" style="left:10px;color:#ddd">Global</div></div><svg class="a" style="left:548px;top:932px" width="7" height="13" viewBox="0 0 7 13"><path d="M3.5 0.5L6.5 5.5H.5zM3.5 12.5L6.5 7.5H.5z" fill="#bbb"/></svg><div class="btn sel" style="left:564px;top:928px;width:20.5px;border-radius:4px 0 0 4px"></div><div class="btn" style="left:583.5px;top:928px;width:21px;border-radius:0"></div><div class="btn" style="left:603.5px;top:928px;width:20.5px;border-radius:0 4px 4px 0"></div><svg class="a" style="left:567.5px;top:931px;opacity:1" width="14" height="14" viewBox="0 0 14 14"><path d="M1 4l6-2.5L13 4v6.5L7 13.2 1 10.5z" fill="#c2c2c2" stroke="#222" stroke-width=".8"/><path d="M1 4l6 2.6L13 4 7 1.5z" fill="#e2e2e2" stroke="#222" stroke-width=".6"/><path d="M7 6.6v6.6L13 10.5V4z" fill="#9a9a9a" stroke="#222" stroke-width=".6"/></svg><svg class="a" style="left:587px;top:931px;opacity:0.55" width="14" height="14" viewBox="0 0 14 14"><path d="M1 4l6-2.5L13 4v6.5L7 13.2 1 10.5z" fill="#c2c2c2" stroke="#222" stroke-width=".8"/><path d="M1 4l6 2.6L13 4 7 1.5z" fill="#e2e2e2" stroke="#222" stroke-width=".6"/><path d="M7 6.6v6.6L13 10.5V4z" fill="#9a9a9a" stroke="#222" stroke-width=".6"/></svg><svg class="a" style="left:607px;top:931px;opacity:0.8" width="14" height="14" viewBox="0 0 14 14"><path d="M1 4l6-2.5L13 4v6.5L7 13.2 1 10.5z" fill="#e0b080" stroke="#222" stroke-width=".8"/><path d="M1 4l6 2.6L13 4 7 1.5z" fill="#e2e2e2" stroke="#222" stroke-width=".6"/><path d="M7 6.6v6.6L13 10.5V4z" fill="#9a9a9a" stroke="#222" stroke-width=".6"/></svg><svg class="a" style="left:566px;top:929px" width="5" height="5"><rect x=".5" y=".5" width="3.5" height="3.5" fill="#ffa31a" stroke="#5a3200" stroke-width=".7"/></svg><div class="btn sel" style="left:629px;top:928px;width:20px;border-radius:4px"></div><svg class="a" style="left:631.5px;top:930px" width="16" height="16" viewBox="0 0 16 16"><rect x="3" y="3" width="10" height="10" fill="#d8d8d8" stroke="#222" stroke-dasharray="2 1.2"/><g fill="#fff" stroke="#111" stroke-width=".8"><circle cx="3" cy="3" r="1.7"/><circle cx="13" cy="3" r="1.7"/><circle cx="3" cy="13" r="1.7"/><circle cx="13" cy="13" r="1.7"/></g></svg><div class="dd" style="left:654px;top:928px;width:35px"></div><svg class="a" style="left:678.5px;top:932px" width="7" height="13" viewBox="0 0 7 13"><path d="M3.5 0.5L6.5 5.5H.5zM3.5 12.5L6.5 7.5H.5z" fill="#bbb"/></svg><svg class="a" style="left:659px;top:931px" width="14" height="14" viewBox="0 0 14 14"><circle cx="7" cy="7" r="5" fill="#8a8a8a" stroke="#2a2a2a"/><circle cx="7" cy="7" r="2.2" fill="#6a6a6a" stroke="#555" stroke-width=".6"/></svg><div class="btn" style="left:694px;top:928px;width:20.5px;border-radius:4px 0 0 4px"></div><svg class="a" style="left:696px;top:930px" width="16" height="16" viewBox="0 0 16 16"><path d="M3.500 8L7.740 3.740A3.200 3.200 0 0 1 12.260 8.260L8 12.500" fill="none" stroke="#3a3a3a" stroke-width="4"/><path d="M3.500 8L7.740 3.740A3.200 3.200 0 0 1 12.260 8.260L8 12.500" fill="none" stroke="#bdbdbd" stroke-width="2.200"/></svg><div class="dd" style="left:713.5px;top:928px;width:35.5px;border-radius:0 4px 4px 0"></div><svg class="a" style="left:738.5px;top:932px" width="7" height="13" viewBox="0 0 7 13"><path d="M3.5 0.5L6.5 5.5H.5zM3.5 12.5L6.5 7.5H.5z" fill="#bbb"/></svg><svg class="a" style="left:716px;top:929px" width="18" height="18" viewBox="0 0 18 18"><path d="M6 4v12M11 4v12M2 8h13M2 13h13" stroke="#e6e6e6" stroke-width="1.3"/><circle cx="6" cy="4.500" r="2.8" fill="#fff" stroke="#2a64c8" stroke-width="1.2"/><circle cx="6" cy="4.500" r="1" fill="#2a64c8"/></svg><div class="btn" style="left:754px;top:928px;width:20px;border-radius:4px"></div><svg class="a" style="left:756px;top:929px" width="17" height="17" viewBox="0 0 17 17"><path d="M3 14l4.500-4.500M7.500 12.500V9.500h-3M14 3L9.500 7.500M9.500 4.500v3h3" stroke="#222" stroke-width="2.6" fill="none"/><path d="M3 14l4.500-4.500M7.500 12.500V9.500h-3M14 3L9.500 7.500M9.500 4.500v3h3" stroke="#f2f2f2" stroke-width="1.300" fill="none"/><circle cx="3" cy="14" r="1.600" fill="#ffa31a" stroke="#5a3200" stroke-width=".6"/><circle cx="14" cy="3" r="1.600" fill="#ffa31a" stroke="#5a3200" stroke-width=".6"/></svg><div class="btn" style="left:779px;top:928px;width:20.5px;border-radius:4px 0 0 4px"></div><div class="btn" style="left:798.5px;top:928px;width:20.5px;border-radius:0 4px 4px 0"></div><svg class="a" style="left:781px;top:929px" width="17" height="17" viewBox="0 0 17 17"><rect x="1.500" y="5.500" width="13" height="9" rx="1" fill="#cfcfcf" stroke="#222"/><rect x="3.500" y="3.500" width="4" height="2.500" fill="#999" stroke="#222" stroke-width=".7"/><circle cx="8.500" cy="10" r="3" fill="#3a3a3a" stroke="#111"/><circle cx="8.500" cy="10" r="1.300" fill="#b03030"/><path d="M13.500 1v5M11 3.500h5" stroke="#ffe14d" stroke-width="1.600"/></svg><svg class="a" style="left:800px;top:929px" width="17" height="17" viewBox="0 0 17 17"><rect x="2.500" y="7.500" width="12" height="7.500" fill="#3a3a3a" stroke="#111"/><path d="M2 6.500l12-3.500.8 2.300-12 3.600z" fill="#eee" stroke="#111" stroke-width=".8"/><path d="M4.500 6l1 2.200M7.500 5l1 2.300M10.500 4.200l1 2.200" stroke="#111" stroke-width="1.200"/><path d="M4 10.500h9M4 12.500h9" stroke="#888" stroke-width=".8"/><rect x="1" y="6" width="2.200" height="4" fill="#3a6fd0"/></svg><svg class="a" style="left:0px;top:941px" width="10" height="10" viewBox="0 0 10 10"><path d="M0 1.0L9.0 10M0 4.5L5.5 10M0 8.0L2.0 10" stroke="rgba(0,0,0,.75)" stroke-width="1"/><path d="M0 -0.3L10.3 10M0 3.2L6.8 10M0 6.7L3.3 10" stroke="rgba(255,255,255,.62)" stroke-width="1"/></svg><div class="a" style="left:0;top:952px;width:1663px;height:23px;background:#444;overflow:hidden"><div class="a" style="left:285.5px;top:0;width:1216.5px;height:23px;background:#727272"></div><div class="a" style="left:0;top:0;width:1663px;height:1px;background:rgba(255,255,255,.1)"></div><svg class="a" style="left:0;top:0" width="1663" height="23" viewBox="0 0 1663 23" shape-rendering="crispEdges"><path d="M12.0 0v23M36.4 0v23M60.9 0v23M85.3 0v23M109.7 0v23M134.2 0v23M158.6 0v23M183.0 0v23M207.4 0v23M231.9 0v23M256.3 0v23M280.7 0v23M1502.2 0v23M1526.7 0v23M1551.1 0v23M1575.5 0v23M1600.0 0v23M1624.4 0v23M1648.8 0v23M1673.2 0v23" stroke="#262626" stroke-width="1" fill="none"/><path d="M305.2 0v23M329.6 0v23M354.0 0v23M378.4 0v23M402.9 0v23M427.3 0v23M451.7 0v23M476.2 0v23M500.6 0v23M525.0 0v23M549.5 0v23M573.9 0v23M598.3 0v23M622.8 0v23M647.2 0v23M671.6 0v23M696.0 0v23M720.5 0v23M744.9 0v23M769.3 0v23M793.8 0v23M818.2 0v23M842.6 0v23M867.0 0v23M891.5 0v23M915.9 0v23M940.3 0v23M964.8 0v23M989.2 0v23M1013.6 0v23M1038.1 0v23M1062.5 0v23M1086.9 0v23M1111.3 0v23M1135.8 0v23M1160.2 0v23M1184.6 0v23M1209.1 0v23M1233.5 0v23M1257.9 0v23M1282.4 0v23M1306.8 0v23M1331.2 0v23M1355.7 0v23M1380.1 0v23M1404.5 0v23M1428.9 0v23M1453.4 0v23M1477.8 0v23" stroke="#6a6a6a" stroke-width="1" fill="none"/></svg><div class="a" style="left:1392px;top:0;width:3px;height:23px;background:#5fd13c"></div></div><svg class="a" style="left:1651px;top:952px" width="12" height="12" viewBox="0 0 12 12"><path d="M1.0 0L12 11.0M4.5 0L12 7.5M8.0 0L12 4.0" stroke="rgba(0,0,0,.75)" stroke-width="1"/><path d="M-0.3 0L12 12.3M3.2 0L12 8.8M6.7 0L12 5.3" stroke="rgba(255,255,255,.62)" stroke-width="1"/></svg><div class="a" id="title"><div class="t tt">Blender</div><div class="tl" style="left:6px;background:#fc5b57;border:0.5px solid #df3e3a"></div><div class="tl" style="left:26px;background:#fdbc40;border:0.5px solid #de9f34"></div><div class="tl" style="left:46px;background:#34c84a;border:0.5px solid #27aa35"></div><div class="a" style="left:10px;top:2.800px;width:4px;height:4px;border-radius:50%;background:#4a0002"></div></div><div class="a" style="left:0;top:16px;width:1913px;height:26px;background:linear-gradient(#8a8a8a 0,#6b6b6b 2px,#6b6b6b 100%)"></div><div class="a" style="left:0;top:42px;width:1913px;height:1px;background:#101010"></div><div class="dd" style="left:6px;top:20px;width:30px;background:linear-gradient(#555,#474747)"></div><svg class="a" style="left:10px;top:22px" width="16" height="16" viewBox="0 0 16 16"><circle cx="8" cy="8" r="6.700" fill="#1a1a1a"/><circle cx="8" cy="8" r="5.600" fill="#264a8a" stroke="#c9d8ee" stroke-width="1.100"/><path d="M6.500 6.800h2.400v3.900h.9v1.200H6.300v-1.200h.9V8H6.500z" fill="#fff"/><circle cx="7.900" cy="4.900" r="1.100" fill="#fff"/></svg><svg class="a" style="left:27px;top:24px" width="7" height="13" viewBox="0 0 7 13"><path d="M3.5 0.5L6.5 5.5H.5zM3.5 12.5L6.5 7.5H.5z" fill="#9a9a9a"/></svg><div class="t" style="left:48.5px;top:24px">File</div><div class="t" style="left:86px;top:24px">Render</div><div class="t" style="left:141.5px;top:24px">Window</div><div class="t" style="left:201px;top:24px">Help</div><div class="dd" style="left:236.5px;top:20px;width:32px;border-radius:4px 0 0 4px"></div><svg class="a" style="left:242px;top:23px" width="14" height="13" viewBox="0 0 14 13"><rect x=".5" y=".5" width="5" height="7" fill="#e4e4e4" stroke="#222"/><rect x=".5" y="8.5" width="5" height="4" fill="#e4e4e4" stroke="#222"/><rect x="6.5" y=".5" width="7" height="12" fill="#e4e4e4" stroke="#222"/></svg><svg class="a" style="left:257.5px;top:24px" width="7" height="13" viewBox="0 0 7 13"><path d="M3.5 0.5L6.5 5.5H.5zM3.5 12.5L6.5 7.5H.5z" fill="#a8a8a8"/></svg><div class="tf" style="left:267.5px;top:20px;width:121px;border-left:none"><div class="t" style="left:8px;top:3px">Default</div></div><div class="btn" style="left:387.5px;top:20px;width:21px;border-radius:0"></div><svg class="a" style="left:394px;top:24px" width="12" height="12" viewBox="0 0 12 12"><path d="M6 .3v11.400M.3 6h11.400" stroke="#111" stroke-width="3.700"/><path d="M6 1.200v9.600M1.200 6h9.600" stroke="#f4f4f4" stroke-width="2"/></svg><div class="btn" style="left:407.5px;top:20px;width:20.500px;border-radius:0 4px 4px 0"></div><svg class="a" style="left:411.5px;top:24px" width="12" height="12" viewBox="0 0 12 12"><path d="M1.300 1.300l9.400 9.400M10.700 1.300l-9.400 9.400" stroke="#111" stroke-width="3.600"/><path d="M2 2l8 8M10 2l-8 8" stroke="#f4f4f4" stroke-width="1.900"/></svg><div class="dd" style="left:434px;top:20px;width:32px;border-radius:4px 0 0 4px"></div><svg class="a" style="left:438px;top:21px" width="18" height="18" viewBox="0 0 18 18"><rect x="8" y="3" width="6" height="10" rx="2.5" fill="#5c8fe0" stroke="#16305e" stroke-width=".8"/><ellipse cx="11" cy="4.5" rx="2.6" ry="1.3" fill="#b8d0f5"/><circle cx="7" cy="12.5" r="3.6" fill="#ddd" stroke="#222" stroke-width=".9"/><circle cx="3.5" cy="4" r="1.9" fill="#f2e85a" stroke="#8a8420" stroke-width=".6"/></svg><svg class="a" style="left:455px;top:24px" width="7" height="13" viewBox="0 0 7 13"><path d="M3.5 0.5L6.5 5.5H.5zM3.5 12.5L6.5 7.5H.5z" fill="#a8a8a8"/></svg><div class="tf" style="left:465px;top:20px;width:121px;border-left:none"><div class="t" style="left:8px;top:3px">Scene</div></div><div class="btn" style="left:585px;top:20px;width:21px;border-radius:0"></div><svg class="a" style="left:591.5px;top:24px" width="12" height="12" viewBox="0 0 12 12"><path d="M6 .3v11.400M.3 6h11.400" stroke="#111" stroke-width="3.700"/><path d="M6 1.200v9.600M1.200 6h9.600" stroke="#f4f4f4" stroke-width="2"/></svg><div class="btn" style="left:605px;top:20px;width:20.500px;border-radius:0 4px 4px 0"></div><svg class="a" style="left:609px;top:24px" width="12" height="12" viewBox="0 0 12 12"><path d="M1.300 1.300l9.400 9.400M10.700 1.300l-9.400 9.400" stroke="#111" stroke-width="3.600"/><path d="M2 2l8 8M10 2l-8 8" stroke="#f4f4f4" stroke-width="1.900"/></svg><div class="dd" style="left:642px;top:20px;width:111px"><div class="t" style="left:7px">Blender Render</div></div><svg class="a" style="left:742.5px;top:24px" width="7" height="13" viewBox="0 0 7 13"><path d="M3.5 0.5L6.5 5.5H.5zM3.5 12.5L6.5 7.5H.5z" fill="#cfcfcf"/></svg><svg class="a" style="left:770px;top:22px" width="18" height="16" viewBox="0 0 18 16"><path d="M1 11.5L8.5 5.8H3.2L3 4.4h6.3L7.2 2.6 8.3 1.4l7 5.7c1.6 1.5 1.7 3.8.5 5.5-1.6 2.2-5 2.6-7.2 1.2-1.5-1-2.1-2.3-2-3.7L2.2 13z" fill="#f08a1d" stroke="#6b3a08" stroke-width=".6"/><circle cx="11.4" cy="9.3" r="3.3" fill="#fff"/><circle cx="11.4" cy="9.3" r="1.9" fill="#255fb5"/></svg><div class="t" style="left:797.5px;top:24px;color:#111;letter-spacing:.09px">v2.75 | Verts:4/4 | Edges:4/4 | Faces:1/1 | Tris:2 | Mem:56.52M | Plane.001</div><svg class="a" style="left:0px;top:32px" width="10" height="10" viewBox="0 0 10 10"><path d="M0 1.0L9.0 10M0 4.5L5.5 10M0 8.0L2.0 10" stroke="rgba(0,0,0,.75)" stroke-width="1"/><path d="M0 -0.3L10.3 10M0 3.2L6.8 10M0 6.7L3.3 10" stroke="rgba(255,255,255,.62)" stroke-width="1"/></svg><svg class="a" style="left:1906px;top:17px" width="12" height="12" viewBox="0 0 12 12"><path d="M1.0 0L12 11.0M4.5 0L12 7.5M8.0 0L12 4.0" stroke="rgba(0,0,0,.75)" stroke-width="1"/><path d="M-0.3 0L12 12.3M3.2 0L12 8.8M6.7 0L12 5.3" stroke="rgba(255,255,255,.62)" stroke-width="1"/></svg><div class="menu" style="left:176px;top:395px;width:185.5px;height:532.5px;border-radius:5px 5px 0 0"><div class="mi" style="top:7px"><div class="t" style="left:30.5px">Show/Hide</div><div class="arr" style="right:6px;top:6px;"></div></div><div class="msep" style="top:31px"></div><div class="mi" style="top:36px"><div class="t" style="left:30.5px">Proportional Editing Falloff</div><i class="ul" style="left:66.7px"></i><div class="arr" style="right:6px;top:6px;"></div></div><div class="mi" style="top:56px"><div class="t" style="left:30.5px">Proportional Editing</div><i class="ul" style="left:30.8px"></i><div class="arr" style="right:6px;top:6px;"></div></div><div class="mi" style="top:76px"><div class="t" style="left:30.5px">AutoMerge Editing</div><div class="a" style="left:11px;top:5px;width:10px;height:10px;background:#4f4f4f;border:1px solid #2c2c2c;border-radius:1px"></div></div><div class="msep" style="top:100px"></div><div class="mi" style="top:105px"><div class="t" style="left:30.5px">Sort Elements...</div><i class="ul" style="left:60.5px"></i><div class="arr" style="right:6px;top:6px;"></div></div><div class="mi" style="top:125px"><div class="t" style="left:30.5px">Bisect</div><i class="ul" style="left:30.8px"></i></div><div class="mi" style="top:145px"><div class="t" style="left:30.5px">Snap to Symmetry</div><i class="ul" style="left:62.7px"></i></div><div class="mi" style="top:165px"><div class="t" style="left:30.5px">Symmetrize</div><i class="ul" style="left:37.1px"></i></div><div class="msep" style="top:189px"></div><div class="mi" style="top:194px"><div class="t" style="left:30.5px">Clean up</div><i class="ul" style="left:30.8px"></i><div class="arr" style="right:6px;top:6px;"></div></div><div class="mi" style="top:214px"><div class="t" style="left:30.5px">Normals</div><i class="ul" style="left:30.8px"></i><div class="arr" style="right:6px;top:6px;"></div></div><div class="mi" style="top:234px"><div class="t" style="left:30.5px">Faces</div><i class="ul" style="left:30.8px"></i><div class="sc" style="right:15px">Ctrl F</div><div class="arr" style="right:6px;top:6px;"></div></div><div class="mi" style="top:254px"><div class="t" style="left:30.5px">Edges</div><i class="ul" style="left:43.3px"></i><div class="sc" style="right:15px">Ctrl E</div><div class="arr" style="right:6px;top:6px;"></div></div><div class="mi" style="top:274px"><div class="t" style="left:30.5px">Vertices</div><i class="ul" style="left:30.8px"></i><div class="sc" style="right:15px">Ctrl V</div><div class="arr" style="right:6px;top:6px;"></div></div><div class="msep" style="top:298px"></div><div class="mi" style="top:303px"><div class="t" style="left:30.5px">Delete</div><i class="ul" style="left:30.8px"></i><div class="sc" style="right:15px">X</div><div class="arr" style="right:6px;top:6px;"></div></div><div class="mi" style="top:323px"><div class="t" style="left:30.5px">Extrude</div><i class="ul" style="left:30.8px"></i><div class="sc" style="right:15px">Alt E</div><div class="arr" style="right:6px;top:6px;"></div></div><div class="mi" style="top:343px"><div class="t" style="left:30.5px">Add Duplicate</div><i class="ul" style="left:30.8px"></i><div class="sc" style="right:6px">Shift D</div></div><div class="msep" style="top:367px"></div><div class="mi hl" style="top:372px"><div class="t" style="left:30px">UV Unwrap...</div><i class="ul" style="left:61.0px"></i><div class="sc" style="right:14.5px">U</div><div class="arr" style="right:5.5px;top:6px;border-left-color:#1d2c44"></div></div><div class="msep" style="top:396px"></div><div class="mi" style="top:401px"><div class="t" style="left:30.5px">Snap</div><i class="ul" style="left:30.8px"></i><div class="sc" style="right:15px">Shift S</div><div class="arr" style="right:6px;top:6px;"></div></div><div class="mi" style="top:421px"><div class="t" style="left:30.5px">Mirror</div><i class="ul" style="left:30.8px"></i><div class="arr" style="right:6px;top:6px;"></div></div><div class="mi" style="top:441px"><div class="t" style="left:30.5px">Transform</div><i class="ul" style="left:30.8px"></i><div class="arr" style="right:6px;top:6px;"></div></div><div class="msep" style="top:465px"></div><div class="mi" style="top:470px"><div class="t" style="left:30.5px">Undo History</div><i class="ul" style="left:59.8px"></i><div class="sc" style="right:6px">Alt Cmd Z</div></div><div class="mi" style="top:490px"><div class="t" style="left:30.5px">Redo</div><i class="ul" style="left:30.8px"></i><div class="sc" style="right:6px">Shift Cmd Z</div></div><div class="mi" style="top:510px"><div class="t" style="left:30.5px">Undo</div><i class="ul" style="left:30.8px"></i><div class="sc" style="right:6px">Cmd Z</div></div></div><div class="menu" style="left:362.5px;top:762px;width:191px;height:220px;border-radius:5px 5px 0 0"><div class="mi" style="top:5px"><div class="t" style="left:30px">Unwrap</div><i class="ul" style="left:30.3px"></i></div><div class="mi hl" style="top:25px"><div class="t" style="left:29.5px">Smart UV Project</div><i class="ul" style="left:29.8px"></i></div><div class="mi" style="top:45px"><div class="t" style="left:30px">Lightmap Pack</div><i class="ul" style="left:30.3px"></i></div><div class="mi" style="top:65px"><div class="t" style="left:30px">Follow Active Quads</div><i class="ul" style="left:30.3px"></i></div><div class="msep" style="top:89px"></div><div class="mi" style="top:94px"><div class="t" style="left:30px">Cube Projection</div><i class="ul" style="left:30.3px"></i></div><div class="mi" style="top:114px"><div class="t" style="left:30px">Cylinder Projection</div><i class="ul" style="left:74.4px"></i></div><div class="mi" style="top:134px"><div class="t" style="left:30px">Sphere Projection</div><i class="ul" style="left:42.9px"></i></div><div class="msep" style="top:158px"></div><div class="mi" style="top:163px"><div class="t" style="left:30px">Project From View</div><i class="ul" style="left:94.8px"></i></div><div class="mi" style="top:183px"><div class="t" style="left:30px">Project from View (Bounds)</div><i class="ul" style="left:123.9px"></i></div><div class="msep" style="top:207px"></div></div><div class="menu" style="left:531px;top:811px;width:800px;height:53px;border-radius:4px;background:rgba(25,25,25,.95)"><div class="t w" style="left:12px;top:12px;letter-spacing:-.04px">This script projection unwraps the selected faces of a mesh (it operates on all selected mesh objects, and can be used to unwrap selected faces, or all faces)</div><div class="t" style="left:11px;top:32px;color:#8c8c8c;font-family:'DejaVu Sans Mono','Liberation Mono',monospace;font-size:10px">Python: bpy.ops.uv.smart_project()</div></div></div></body></html>
